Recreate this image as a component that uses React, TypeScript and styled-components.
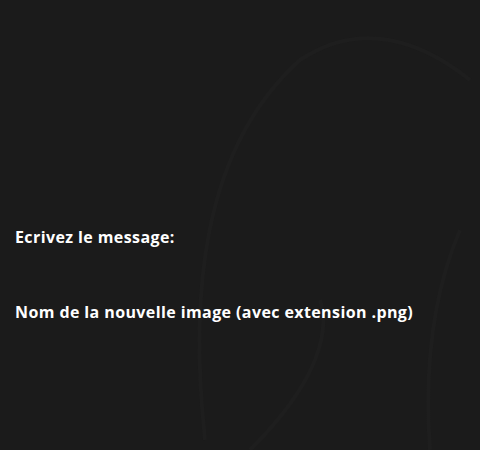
import React from "react";
import styled, { createGlobalStyle } from "styled-components";

const Global = createGlobalStyle`
  html, body { margin: 0; padding: 0; background: #1b1b1b; }
  body { font-family: "Open Sans", "Liberation Sans", sans-serif; }
`;

const Page = styled.div`
  position: relative;
  width: 480px;
  height: 450px;
  overflow: hidden;
  background: #1b1b1b;
`;

const Backdrop = styled.svg`
  position: absolute;
  inset: 0;
  pointer-events: none;
`;

const Form = styled.form`
  position: relative;
  display: flex;
  flex-direction: column;
  padding: 226px 15px 0;
`;

const Field = styled.div`
  display: flex;
  flex-direction: column;
`;

const Label = styled.label`
  color: #ffffff;
  font-family: "Open Sans", "Liberation Sans", sans-serif;
  font-weight: 700;
  font-size: 16px;
  line-height: 22px;
  letter-spacing: 0.4px;
`;

const HiddenInput = styled.input`
  height: 53px;
  border: none;
  background: transparent;
  outline: none;
  padding: 0;
  color: #fff;
`;

export default function App() {
  return (
    <Page>
      <Global />
      <Backdrop width="480" height="450" viewBox="0 0 480 450">
        <path d="M205 440 C 190 300, 200 150, 300 60 C 360 20, 420 40, 470 80" fill="none" stroke="#1e1e1e" strokeWidth="4" />
        <path d="M250 450 C 320 380, 330 330, 320 300" fill="none" stroke="#1e1e1e" strokeWidth="4" />
        <path d="M430 450 C 425 380, 430 300, 460 230" fill="none" stroke="#1e1e1e" strokeWidth="4" />
      </Backdrop>
      <Form>
        <Field>
          <Label htmlFor="msg">Ecrivez le message:</Label>
          <HiddenInput id="msg" />
        </Field>
        <Field>
          <Label htmlFor="name">Nom de la nouvelle image (avec extension .png)</Label>
          <HiddenInput id="name" />
        </Field>
      </Form>
    </Page>
  );
}
